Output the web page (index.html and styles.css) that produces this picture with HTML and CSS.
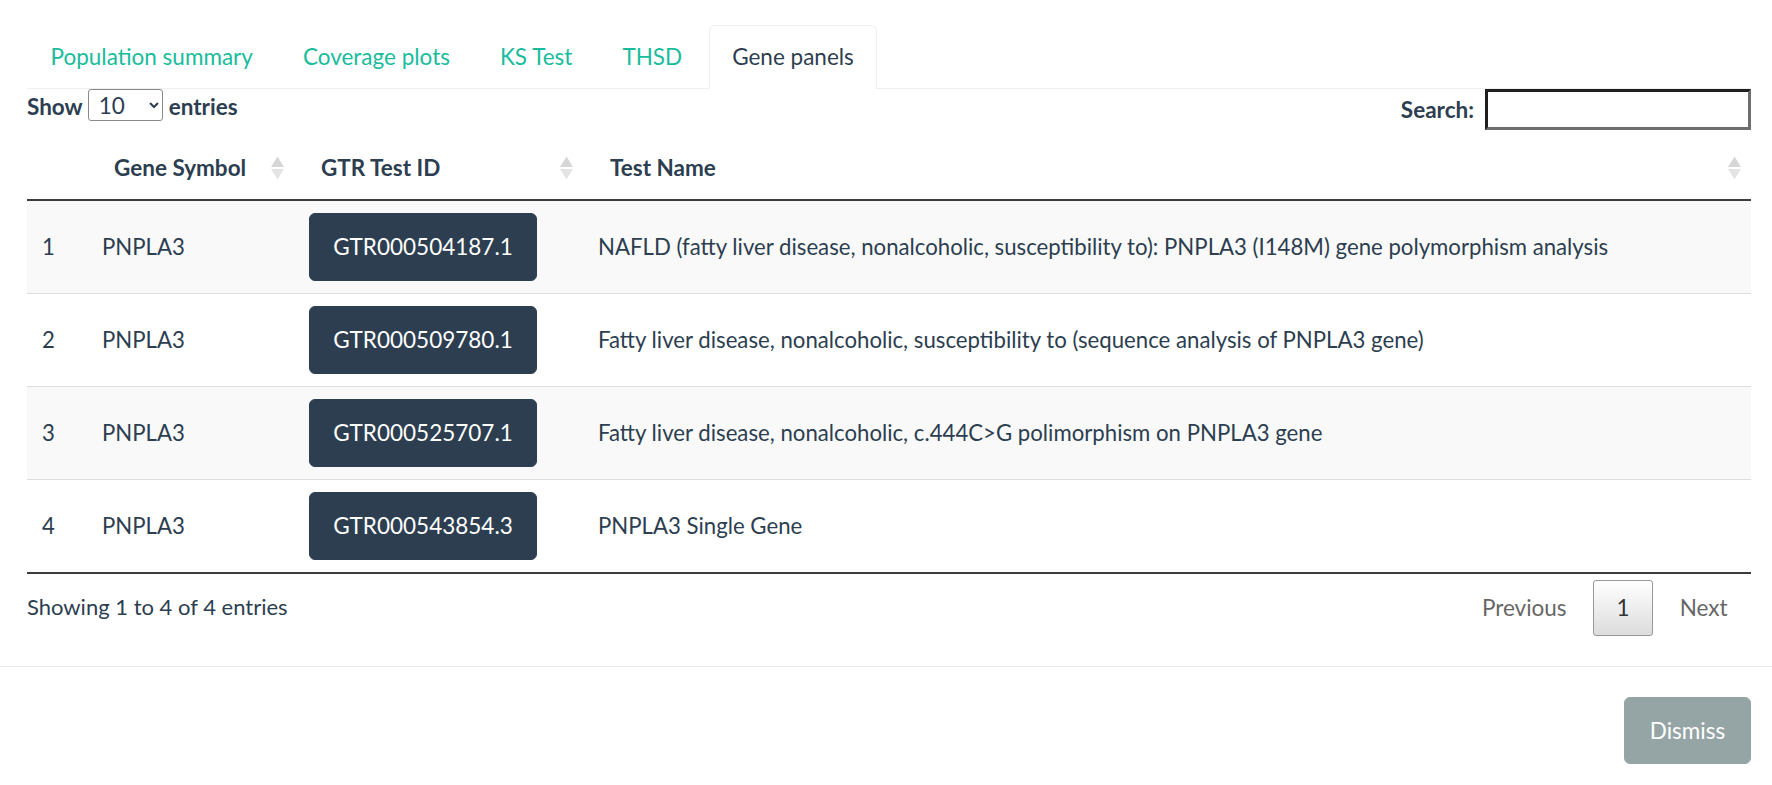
FILE: index.html
```html
<!DOCTYPE html>
<html lang="en">
<head>
<meta charset="utf-8">
<title>Gene panels</title>
<link rel="stylesheet" href="styles.css">
</head>
<body>
<div class="modal">
  <div class="modal-body">
    <ul class="nav-tabs">
      <li><a href="#">Population summary</a></li>
      <li><a href="#">Coverage plots</a></li>
      <li><a href="#">KS Test</a></li>
      <li><a href="#">THSD</a></li>
      <li class="active"><a href="#">Gene panels</a></li>
    </ul>
    <div class="dt-wrapper">
      <div class="dt-top">
        <label class="dt-length">Show
          <select class="dt-select"><option>10</option><option>25</option><option>50</option><option>100</option></select>
          entries</label>
        <label class="dt-filter">Search:<input class="dt-search" type="search"></label>
      </div>
      <table class="dt">
        <colgroup>
          <col class="c1"><col class="c2"><col class="c3"><col class="c4">
        </colgroup>
        <thead>
          <tr>
            <th></th>
            <th>Gene Symbol<svg class="sort" width="13" height="23" viewBox="0 0 13 23"><path d="M6.5 0 L13 10.5 H0 Z" fill="#d6d6d6"/><path d="M0 12.5 H13 L6.5 23 Z" fill="#e4e4e4"/></svg></th>
            <th>GTR Test ID<svg class="sort" width="13" height="23" viewBox="0 0 13 23"><path d="M6.5 0 L13 10.5 H0 Z" fill="#d6d6d6"/><path d="M0 12.5 H13 L6.5 23 Z" fill="#e4e4e4"/></svg></th>
            <th>Test Name<svg class="sort" width="13" height="23" viewBox="0 0 13 23"><path d="M6.5 0 L13 10.5 H0 Z" fill="#d6d6d6"/><path d="M0 12.5 H13 L6.5 23 Z" fill="#e4e4e4"/></svg></th>
          </tr>
        </thead>
        <tbody>
          <tr class="odd">
            <td>1</td><td>PNPLA3</td>
            <td><a class="btn-id" href="#">GTR000504187.1</a></td>
            <td>NAFLD (fatty liver disease, nonalcoholic, susceptibility to): PNPLA3 (I148M) gene polymorphism analysis</td>
          </tr>
          <tr>
            <td>2</td><td>PNPLA3</td>
            <td><a class="btn-id" href="#">GTR000509780.1</a></td>
            <td>Fatty liver disease, nonalcoholic, susceptibility to (sequence analysis of PNPLA3 gene)</td>
          </tr>
          <tr class="odd">
            <td>3</td><td>PNPLA3</td>
            <td><a class="btn-id" href="#">GTR000525707.1</a></td>
            <td>Fatty liver disease, nonalcoholic, c.444C&gt;G polimorphism on PNPLA3 gene</td>
          </tr>
          <tr>
            <td>4</td><td>PNPLA3</td>
            <td><a class="btn-id" href="#">GTR000543854.3</a></td>
            <td>PNPLA3 Single Gene</td>
          </tr>
        </tbody>
      </table>
      <div class="dt-bottom">
        <div class="dt-info">Showing 1 to 4 of 4 entries</div>
        <div class="dt-paginate">
          <span class="pbtn">Previous</span>
          <span class="pbtn current">1</span>
          <span class="pbtn">Next</span>
        </div>
      </div>
    </div>
  </div>
  <div class="modal-footer">
    <button class="btn-dismiss" type="button">Dismiss</button>
  </div>
</div>
</body>
</html>
```

FILE: styles.css
```css
* { box-sizing: border-box; }

html, body {
  margin: 0;
  padding: 0;
  background: #ffffff;
}

body {
  font-family: Lato, "Noto Sans", sans-serif;
  font-size: 22.5px;
  line-height: 32px;
  color: #2c3e50;
}

.modal {
  width: 1772px;
}

.modal-body {
  padding: 25px 21px 30px 27px;
}

/* Tabs */
.nav-tabs {
  list-style: none;
  margin: 0;
  padding: 0;
  display: flex;
  border-bottom: 1px solid #ecf0f1;
}

.nav-tabs li {
  margin-bottom: -1px;
  margin-right: 3px;
}

.nav-tabs a {
  display: block;
  padding: 15px 22.5px;
  border: 1px solid transparent;
  border-radius: 6px 6px 0 0;
  color: #18bc9c;
  text-decoration: none;
  line-height: 32px;
}

.nav-tabs li.active a {
  color: #2c3e50;
  background: #ffffff;
  border-color: #ecf0f1 #ecf0f1 transparent;
}

/* DataTables top controls */
.dt-top {
  display: flex;
  justify-content: space-between;
  align-items: flex-start;
  height: 41px;
}

.dt-length {
  display: flex;
  align-items: center;
  height: 35px;
  font-weight: bold;
}

.dt-select {
  margin: 0 6px 0 5px;
  height: 32px;
  width: 75px;
  font-family: Lato, "Noto Sans", sans-serif;
  font-size: 22.5px;
  color: #2c3e50;
  padding: 0 4px 0 6px;
  border: 1px solid #8a8a8a;
  border-radius: 3px;
  background: #ffffff;
  align-self: flex-start;
}

.dt-filter {
  display: flex;
  align-items: center;
  font-weight: bold;
  height: 42px;
}

.dt-search {
  margin-left: 11px;
  width: 266px;
  height: 41px;
  align-self: flex-start;
  border-style: solid;
  border-width: 3px;
  border-color: #1f1f1f #6e6e6e #6e6e6e #1f1f1f;
  background: #ffffff;
  font-family: Lato, "Noto Sans", sans-serif;
  font-size: 22.5px;
  padding: 0 6px;
  outline: none;
}

/* Table */
.dt {
  margin-top: 7px;
  width: 100%;
  border-collapse: separate;
  border-spacing: 0;
  table-layout: fixed;
}

.c1 { width: 60px; }
.c2 { width: 207px; }
.c3 { width: 289px; }
.c4 { width: auto; }

.dt th {
  position: relative;
  padding: 15px 27px;
  text-align: left;
  font-weight: bold;
  border-bottom: 2px solid #3c3c3c;
  white-space: nowrap;
}

.sort {
  position: absolute;
  right: 10px;
  top: 50%;
  transform: translateY(-50%);
}

.dt td {
  padding: 12px 15px;
  vertical-align: middle;
  border-top: 1px solid #dddddd;
  font-size: 22.2px;
}

.dt tbody tr:first-child td {
  border-top: none;
}

.dt tbody tr:last-child td {
  border-bottom: 2px solid #3c3c3c;
}

.dt tr.odd td {
  background: #f9f9f9;
}

.btn-id {
  display: block;
  width: 228px;
  padding: 17px 0;
  text-align: center;
  line-height: 32px;
  font-size: 22.5px;
  background: #2c3e50;
  border: 1px solid #2c3e50;
  border-radius: 6px;
  color: #ffffff;
  text-decoration: none;
}

/* Bottom */
.dt-bottom {
  display: flex;
  justify-content: space-between;
  align-items: flex-start;
}

.dt-info {
  padding-top: 17px;
  font-size: 22px;
}

.dt-paginate {
  display: flex;
  padding-top: 5.5px;
}

.pbtn {
  display: block;
  padding: 11.25px 22.5px;
  margin-left: 3px;
  border: 1px solid transparent;
  border-radius: 3px;
  color: #666666;
  line-height: 32px;
  min-width: 34px;
  text-align: center;
}

.pbtn.current {
  color: #333333;
  border-color: #979797;
  background: linear-gradient(to bottom, #ffffff 0%, #dcdcdc 100%);
}

/* Footer */
.modal-footer {
  border-top: 1px solid #e9e9e9;
  padding: 30px 21px 21px 27px;
  display: flex;
  justify-content: flex-end;
}

.btn-dismiss {
  font-family: Lato, "Noto Sans", sans-serif;
  font-size: 22.5px;
  line-height: 32px;
  padding: 16.5px 0;
  width: 127px;
  text-align: center;
  background: #95a5a6;
  border: 1px solid #95a5a6;
  border-radius: 6px;
  color: #ffffff;
}
```
